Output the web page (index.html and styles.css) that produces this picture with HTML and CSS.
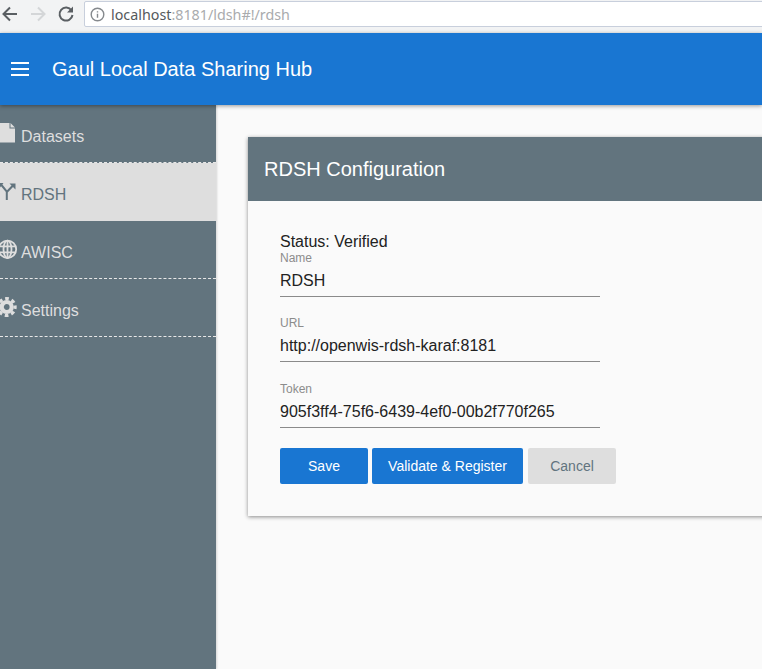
FILE: index.html
```html
<!DOCTYPE html>
<html lang="en">
<head>
    <meta charset="UTF-8">
    <meta name="viewport" content="width=device-width, initial-scale=1.0">
    <title>Gaul Local Data Sharing Hub</title>
    <link rel="stylesheet" href="styles.css">
</head>
<body>
    <div class="browser-bar">
        <svg class="nav-icon" width="20" height="20" viewBox="0 0 20 20"><path d="M17 10H4M10 3.500L3.500 10l6.500 6.500" fill="none" stroke="#5a5f63" stroke-width="2"/></svg>
        <svg class="nav-icon" width="20" height="20" viewBox="0 0 20 20"><path d="M3 10h13M10 3.500l6.500 6.500-6.500 6.500" fill="none" stroke="#d4d6d8" stroke-width="2"/></svg>
        <svg class="nav-icon" width="20" height="20" viewBox="0 0 20 20"><path d="M15.500 6.500A6.500 6.500 0 1 0 16.500 11" fill="none" stroke="#5a5f63" stroke-width="2"/><path d="M17 2.500V8.500H11z" fill="#5a5f63"/></svg>
        <div class="omnibox">
            <svg class="info-icon" width="15" height="15" viewBox="0 0 15 15"><circle cx="7.500" cy="7.500" r="6.300" fill="none" stroke="#85898d" stroke-width="1.400"/><path d="M7.500 6.700v4M7.500 4.200v1.400" stroke="#85898d" stroke-width="1.400"/></svg>
            <span class="url"><span class="url-host">localhost</span>:8181/ldsh#!/rdsh</span>
        </div>
    </div>

    <header class="toolbar">
        <div class="menu-icon"><span></span><span></span><span></span></div>
        <h1>Gaul Local Data Sharing Hub</h1>
    </header>

    <div class="content">
        <nav class="sidebar">
            <a class="nav-item dashed">
                <svg class="item-icon" width="18" height="20" viewBox="0 0 18 20"><path d="M-1 0h10.500v5.500H15V19.500H-1zM10.500 0L15 4.500h-4.500z" fill="#dedede"/></svg>
                <span>Datasets</span>
            </a>
            <a class="nav-item active">
                <svg class="item-icon" width="18" height="20" viewBox="0 0 18 20"><path d="M1 3.500l5.800 7v8.500M13 4.500L6.800 11" fill="none" stroke="#62747e" stroke-width="2"/><path d="M9.500 2.500H15.500V8.500zM0 6.500V2h3.500z" fill="#62747e"/></svg>
                <span>RDSH</span>
            </a>
            <a class="nav-item dashed">
                <svg class="item-icon" width="18" height="20" viewBox="0 0 18 20"><g fill="none" stroke="#dedede" stroke-width="1.800"><circle cx="7.500" cy="10.300" r="8.700"/><ellipse cx="7.500" cy="10.300" rx="4" ry="8.700"/><path d="M-1 7.300h17M-1 13.300h17M7.500 1.500v17.500"/></g></svg>
                <span>AWISC</span>
            </a>
            <a class="nav-item dashed">
                <svg class="item-icon" width="18" height="20" viewBox="0 0 18 20"><g fill="none" stroke="#dedede"><circle cx="6.700" cy="10" r="5" stroke-width="4.200"/><circle cx="6.700" cy="10" r="8.400" stroke-width="3.200" stroke-dasharray="3.700 2.900" stroke-dashoffset="1.850"/></g></svg>
                <span>Settings</span>
            </a>
        </nav>

        <main class="main">
            <section class="card">
                <div class="card-header">RDSH Configuration</div>
                <form class="card-body">
                    <div class="status">Status: Verified</div>
                    <div class="field first">
                        <label for="name">Name</label>
                        <input type="text" id="name" value="RDSH">
                    </div>
                    <div class="field">
                        <label for="url">URL</label>
                        <input type="text" id="url" value="http://openwis-rdsh-karaf:8181">
                    </div>
                    <div class="field">
                        <label for="token">Token</label>
                        <input type="text" id="token" value="905f3ff4-75f6-6439-4ef0-00b2f770f265">
                    </div>
                    <div class="actions">
                        <button type="button" class="btn-save">Save</button>
                        <button type="button" class="btn-validate">Validate &amp; Register</button>
                        <button type="button" class="btn-cancel">Cancel</button>
                    </div>
                </form>
            </section>
        </main>
    </div>
</body>
</html>
```

FILE: styles.css
```css
html, body {
    height: 100%;
}

body {
    font-family: "Liberation Sans", Arial, sans-serif;
    background-color: #fafafa;
    margin: 0;
    padding: 0;
    display: flex;
    flex-direction: column;
    overflow: hidden;
}

.browser-bar {
    height: 33px;
    flex: none;
    box-sizing: border-box;
    display: flex;
    align-items: flex-start;
    background-color: #f2f3f4;
    padding-top: 4px;
    gap: 8px;
}

.nav-icon,
.info-icon {
    flex: none;
}

.omnibox {
    width: 700px;
    height: 26px;
    flex: none;
    box-sizing: border-box;
    margin-top: -3px;
    display: flex;
    align-items: center;
    gap: 5px;
    padding-left: 5px;
    background-color: #ffffff;
    border: 1px solid #c8cfdc;
    border-radius: 2px;
}

.url {
    font-family: "Noto Sans", sans-serif;
    font-size: 14.300px;
    margin-left: 1px;
    color: #a9abad;
}

.url-host {
    color: #55595c;
}

.toolbar {
    height: 72px;
    flex: none;
    display: flex;
    align-items: center;
    background-color: #1976d2;
    color: #ffffff;
    box-shadow: 0 1px 4px rgba(0, 0, 0, 0.4);
    position: relative;
    z-index: 2;
}

.menu-icon {
    width: 18px;
    margin-left: 11px;
    display: flex;
    flex-direction: column;
    gap: 4px;
}

.menu-icon span {
    height: 2px;
    background-color: #ffffff;
}

.toolbar h1 {
    margin: 0 0 0 23px;
    font-size: 20px;
    font-weight: 400;
}

.content {
    flex: 1;
    display: flex;
    min-height: 0;
}

.sidebar {
    width: 216px;
    flex: none;
    background-color: #62747e;
    box-shadow: 1px 0 2px rgba(0, 0, 0, 0.15);
}

.nav-item {
    height: 58px;
    box-sizing: border-box;
    display: flex;
    align-items: center;
    gap: 3px;
    padding-top: 6px;
    font-size: 16px;
    color: #dedede;
}

.nav-item .item-icon {
    flex: none;
    margin-top: -8px;
}

.nav-item.dashed {
    border-bottom: 1px dashed #e8e8e8;
}

.nav-item.active {
    background-color: #dedede;
    color: #62747e;
}

.main {
    flex: 1;
    min-width: 0;
    padding: 32px 0 0 32px;
    overflow: hidden;
}

.card {
    width: 620px;
    background-color: #fafafa;
    box-shadow: 0 1px 4px rgba(0, 0, 0, 0.45);
}

.card-header {
    height: 64px;
    display: flex;
    align-items: center;
    padding-left: 16px;
    background-color: #62747e;
    color: #ffffff;
    font-size: 20px;
}

.card-body {
    padding: 32px;
    height: 315px;
    box-sizing: border-box;
    color: #222222;
}

.status {
    font-size: 16px;
    line-height: 18px;
}

.field {
    width: 320px;
    margin-top: 19.400px;
    border-bottom: 1px solid #8a8a8a;
    padding-bottom: 3px;
}

.field.first {
    margin-top: 0;
}

.field label {
    display: block;
    font-size: 12px;
    line-height: 14px;
    color: #8c8c8c;
}

.field input {
    display: block;
    width: 100%;
    box-sizing: border-box;
    height: 24px;
    margin-top: 4px;
    padding: 0;
    border: none;
    outline: none;
    background: transparent;
    font-family: inherit;
    font-size: 16px;
    color: #222222;
}

.actions {
    display: flex;
    gap: 4px;
    margin-top: 20px;
}

.actions button {
    height: 36px;
    border: none;
    border-radius: 2px;
    font-family: "Liberation Sans", Arial, sans-serif;
    font-size: 14px;
    cursor: pointer;
}

.btn-save {
    width: 88px;
    background-color: #1976d2;
    color: #ffffff;
}

.btn-validate {
    width: 151px;
    background-color: #1976d2;
    color: #ffffff;
}

.btn-cancel {
    width: 88px;
    margin-left: 1px;
    background-color: #dedede;
    color: #62747e;
}
```
